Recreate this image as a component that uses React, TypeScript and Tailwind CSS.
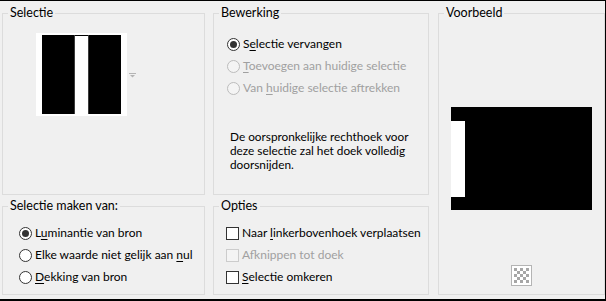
import React from "react";

function Radio({ checked = false, disabled = false }: { checked?: boolean; disabled?: boolean }) {
  return (
    <span
      className={`w-[13px] h-[13px] rounded-full border flex items-center justify-center shrink-0 ${
        disabled ? "border-[#bcbcbc] bg-[#f4f4f4]" : "border-[#333333] bg-white"
      }`}
    >
      {checked && <span className="w-[7px] h-[7px] rounded-full bg-[#333333]" />}
    </span>
  );
}

function Check({ disabled = false }: { disabled?: boolean }) {
  return (
    <span
      className={`w-[13px] h-[13px] border shrink-0 ${
        disabled ? "border-[#cccccc] bg-[#f4f4f4]" : "border-[#333333] bg-white"
      }`}
    />
  );
}

function Row({ children, disabled = false }: { children: React.ReactNode; disabled?: boolean }) {
  return (
    <div className={`h-[22px] flex items-center gap-[3px] ${disabled ? "text-[#a0a0a0]" : "text-black"}`}>
      {children}
    </div>
  );
}

function Key({ children }: { children: React.ReactNode }) {
  return <u className="underline underline-offset-[2px]">{children}</u>;
}

function Group({ title, className, children }: { title: string; className: string; children?: React.ReactNode }) {
  return (
    <fieldset className={`border border-[#dcdcdc] ${className}`}>
      <legend className="ml-[5px] px-[2px] text-[12.5px] leading-[16px] text-black">{title}</legend>
      {children}
    </fieldset>
  );
}

export default function App() {
  return (
    <div className="w-[606px] h-[301px] bg-[#f0f0f0] border-t border-r border-b-2 border-black pl-[2px] pt-[4px] flex font-['Lato','Liberation_Sans',sans-serif] text-[12px] text-black">
      {/* linker kolom */}
      <div className="w-[203px] flex flex-col">
        <Group title="Selectie" className="h-[190px]">
          <div className="flex pt-[12px] pl-[33px]">
            <div className="bg-white px-[6px] py-[2px]">
              <div className="w-[79px] h-[79px] flex">
                <div className="w-[32px] bg-black" />
                <div className="w-px bg-[#3c3c3c]" />
                <div className="w-[13px] bg-white border-t border-black" />
                <div className="w-px bg-[#3c3c3c]" />
                <div className="w-[32px] bg-black" />
              </div>
            </div>
            <svg width="7" height="5" viewBox="0 0 7 5" className="ml-[2px] mt-[40px]">
              <rect x="0" y="0" width="7" height="1" fill="#b4b4b4" />
              <path d="M1 2 H6 L3.5 4.5 Z" fill="#b4b4b4" />
            </svg>
          </div>
        </Group>
        <Group title="Selectie maken van:" className="h-[97px] mt-[3px]">
          <div className="pt-[8px] pl-[16px]">
            <Row>
              <Radio checked />
              <span>
                L<Key>u</Key>minantie van bron
              </span>
            </Row>
            <Row>
              <Radio />
              <span>
                Elke waarde niet gelijk aan <Key>n</Key>ul
              </span>
            </Row>
            <Row>
              <Radio />
              <span>
                <Key>D</Key>ekking van bron
              </span>
            </Row>
          </div>
        </Group>
      </div>

      {/* middelste kolom */}
      <div className="w-[216px] ml-2 flex flex-col">
        <Group title="Bewerking" className="h-[190px]">
          <div className="pt-[12px] pl-[13px]">
            <Row>
              <Radio checked />
              <span>
                S<Key>e</Key>lectie vervangen
              </span>
            </Row>
            <Row disabled>
              <Radio disabled />
              <span>
                <Key>T</Key>oevoegen aan huidige selectie
              </span>
            </Row>
            <Row disabled>
              <Radio disabled />
              <span>
                Van <Key>h</Key>uidige selectie aftrekken
              </span>
            </Row>
          </div>
          <p className="mt-[31px] pl-[16px] text-[11.8px] leading-[14px]">
            De oorspronkelijke rechthoek voor
            <br />
            deze selectie zal het doek volledig
            <br />
            doorsnijden.
          </p>
        </Group>
        <Group title="Opties" className="h-[97px] mt-[3px]">
          <div className="pt-[8px] pl-[12px]">
            <Row>
              <Check />
              <span>
                Naar <Key>l</Key>inkerbovenhoek verplaatsen
              </span>
            </Row>
            <Row disabled>
              <Check disabled />
              <span>
                Af<Key>k</Key>nippen tot doek
              </span>
            </Row>
            <Row>
              <Check />
              <span>
                <Key>S</Key>electie omkeren
              </span>
            </Row>
          </div>
        </Group>
      </div>

      {/* voorbeeld */}
      <Group title="Voorbeeld" className="w-[167px] h-[290px] ml-[9px]">
        <div className="flex flex-col items-center">
          <div className="mt-[86px] w-[141px] h-[103px] bg-black pt-[14px]">
            <div className="w-[14px] h-[76px] bg-white" />
          </div>
          <svg width="21" height="21" viewBox="0 0 21 21" className="mt-[55px]">
            <rect x="0.5" y="0.5" width="20" height="20" fill="#ffffff" stroke="#b4b4b4" />
            {[0, 1, 2, 3, 4].map((r) =>
              [0, 1, 2, 3, 4].map((c) =>
                (r + c) % 2 === 0 ? (
                  <rect key={`${r}-${c}`} x={3 + c * 3} y={3 + r * 3} width="3" height="3" fill="#a6a6a6" />
                ) : null
              )
            )}
          </svg>
        </div>
      </Group>
    </div>
  );
}
